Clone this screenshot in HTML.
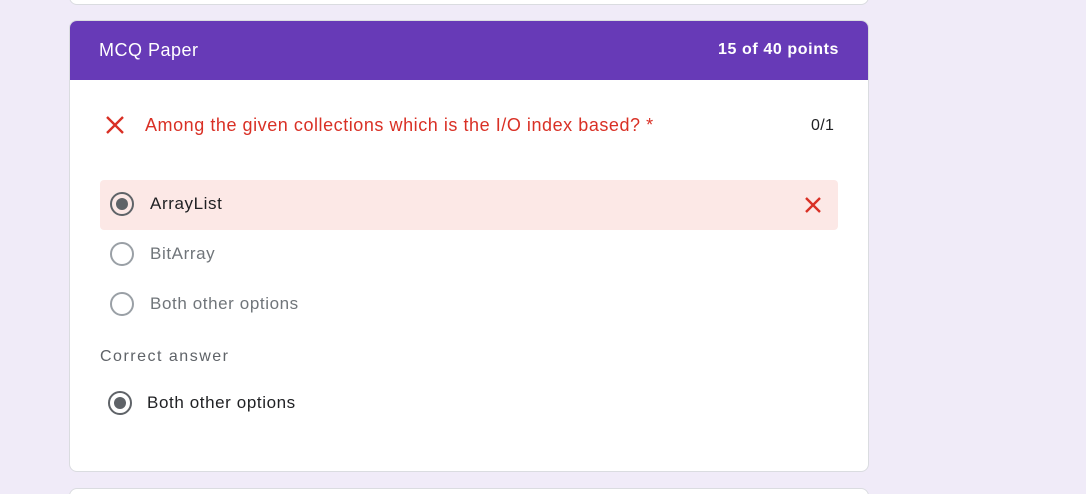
<!DOCTYPE html>
<html><head><style>
*{margin:0;padding:0;box-sizing:border-box}
html,body{width:1086px;height:494px;overflow:hidden}
body{background:#f0ebf8;font-family:"Liberation Sans",Arial,sans-serif;position:relative}
.card{position:absolute;left:69px;width:800px;background:#fff;border:1px solid #dadce0;border-radius:8px}
.abs{position:absolute;white-space:nowrap}
.radio{position:absolute;width:24px;height:24px;border:2px solid #9aa0a6;border-radius:50%}
.radio.on{border-color:#5f6368}
.radio.on::after{content:"";position:absolute;left:4px;top:4px;width:12px;height:12px;border-radius:50%;background:#5f6368}
</style></head><body>
<div class="card" style="top:-20px;height:25px"></div>
<div class="card" style="top:20px;height:452px;overflow:hidden">
  <div style="height:59px;background:#673ab7;position:relative">
    <div class="abs" style="left:29px;top:19px;color:#fff;font-size:18px;letter-spacing:0.5px">MCQ Paper</div>
    <div class="abs" style="right:29px;top:20px;color:#fff;font-size:16px;font-weight:bold;letter-spacing:0.6px">15 of 40 points</div>
  </div>
</div>
<svg class="abs" style="left:105px;top:115px" width="20" height="20" viewBox="0 0 20 20"><path d="M2 2L18 18M18 2L2 18" stroke="#d93025" stroke-width="2.4"/></svg>
<div class="abs" style="left:145px;top:115px;color:#d93025;font-size:18px;letter-spacing:0.55px">Among the given collections which is the I/O index based? *</div>
<div class="abs" style="left:811px;top:117px;color:#202124;font-size:16px;letter-spacing:0.3px">0/1</div>
<div class="abs" style="left:100px;top:180px;width:738px;height:50px;background:#fce8e6;border-radius:4px"></div>
<div class="radio on" style="left:110px;top:192px"></div>
<div class="abs" style="left:150px;top:194px;color:#202124;font-size:17px;letter-spacing:0.6px">ArrayList</div>
<svg class="abs" style="left:804px;top:196px" width="18" height="18" viewBox="0 0 18 18"><path d="M2 2L16 16M16 2L2 16" stroke="#d93025" stroke-width="2.4"/></svg>
<div class="radio" style="left:110px;top:242px"></div>
<div class="abs" style="left:150px;top:244px;color:#70757a;font-size:17px;letter-spacing:0.6px">BitArray</div>
<div class="radio" style="left:110px;top:292px"></div>
<div class="abs" style="left:150px;top:294px;color:#70757a;font-size:17px;letter-spacing:0.6px">Both other options</div>
<div class="abs" style="left:100px;top:348px;color:#5f6368;font-size:16px;letter-spacing:1.5px;font-weight:500">Correct answer</div>
<div class="radio on" style="left:108px;top:391px"></div>
<div class="abs" style="left:147px;top:393px;color:#202124;font-size:17px;letter-spacing:0.6px">Both other options</div>
<div class="card" style="top:488px;height:20px"></div>
</body></html>
